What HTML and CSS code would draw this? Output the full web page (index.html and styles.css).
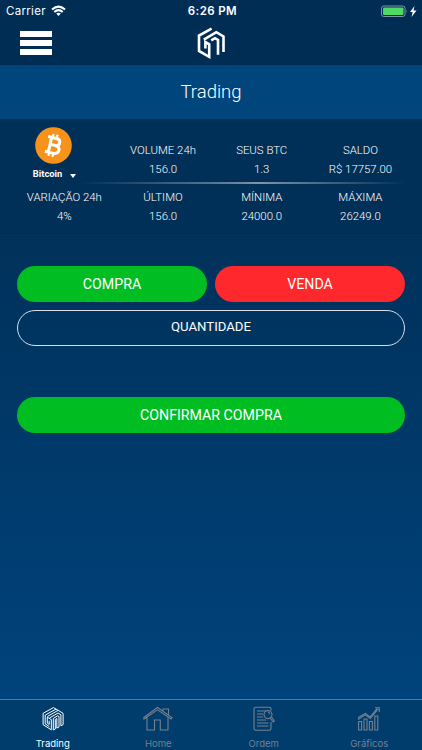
FILE: index.html
```html
<!DOCTYPE html>
<html lang="pt-BR">
<head>
<meta charset="utf-8">
<meta name="viewport" content="width=device-width, initial-scale=1">
<title>Trading</title>
<link rel="stylesheet" href="styles.css">
</head>
<body>
<div class="app">
  <header class="top">
    <div class="status">
      <div class="carrier"><span>Carrier</span>
        <svg width="15" height="12" viewBox="0 0 15 12" fill="none" stroke="#fff" stroke-width="2"><path d="M1 4.4Q7.5-1.2 14 4.4M3.3 7Q7.5 3.3 11.7 7"/><path d="M5.2 8.6Q7.5 6.7 9.8 8.6L7.5 11Z" fill="#fff" stroke="none"/></svg>
      </div>
      <div class="clock">6:26 PM</div>
      <div class="power">
        <svg width="36" height="13" viewBox="0 0 36 13"><rect x=".5" y="1" width="23.5" height="10.5" rx="2.2" fill="none" stroke="#8295a8"/><rect x="2" y="2.5" width="20.5" height="7.5" rx="1" fill="#4cd964"/><path d="M25.3 4.5q1.4 1.7 0 3.5z" fill="#8295a8"/><path d="M33.5 1 29 7h2.7L30.5 12 35.5 5.4h-3z" fill="#fff"/></svg>
      </div>
    </div>
    <div class="nav">
      <div class="menu"><i></i><i></i><i></i></div>
      <svg class="logo" width="30" height="33" viewBox="0 0 30 33" fill="none" stroke="#fff" stroke-width="2.6"><path d="M15.6 2.6 3 9.6V25L13.2 30.8V18.3L9.4 16V22.6"/><path d="M7.8 13.6 20.3 6.2 27.5 10.4V26"/><path d="M15.2 14.3 19 12.2 22 14V28.8"/></svg>
    </div>
  </header>
  <h1 class="title">Trading</h1>
  <section class="stats">
    <div class="row first">
      <div class="coin">
        <svg width="37" height="37" viewBox="0 0 36 36"><circle cx="18" cy="18" r="17.8" fill="#f7931a"/><g transform="rotate(13 18 18)" fill="none" stroke="#fff"><path d="M11 10.7h8.2q4.1 0 4.1 3.4T19.2 17.6H14.5M18.8 17.6q5.4 0 5.4 3.9T18.8 25.4H11M14.5 10.7v14.7" stroke-width="2.9"/><path d="M15.5 7v3.5M19.5 7v3.5M15.5 25.5V29M19.5 25.5V29" stroke-width="2.1"/></g></svg>
        <div class="pick"><span>Bitcoin</span><svg width="6" height="4" viewBox="0 0 6 4"><path d="M0 0h6L3 4z" fill="#fff"/></svg></div>
      </div>
      <div class="stat"><span>VOLUME 24h</span><span>156.0</span></div>
      <div class="stat"><span>SEUS BTC</span><span>1.3</span></div>
      <div class="stat"><span>SALDO</span><span>R$ 17757.00</span></div>
    </div>
    <div class="rule"></div>
    <div class="row">
      <div class="stat"><span>VARIAÇÃO 24h</span><span>4%</span></div>
      <div class="stat"><span>ÚLTIMO</span><span>156.0</span></div>
      <div class="stat"><span>MÍNIMA</span><span>24000.0</span></div>
      <div class="stat"><span>MÁXIMA</span><span>26249.0</span></div>
    </div>
  </section>
  <main class="order">
    <div class="sides">
      <button class="btn buy">COMPRA</button>
      <button class="btn sell">VENDA</button>
    </div>
    <button class="btn amount">QUANTIDADE</button>
    <button class="btn buy confirm">CONFIRMAR COMPRA</button>
  </main>
  <nav class="tabs">
    <div class="tab active">
      <svg width="30" height="26" viewBox="0 0 30 26" fill="none" stroke="#fff" stroke-width="1"><path d="M15.5 1.6 5.1 7.3V18.7L13.3 23.8V13.5L9.3 11.2V17.2L11.2 18.3V14.8"/><path d="M15.5 1.6 18 3.1 7.2 9.1V17.9L11.4 20.6"/><path d="M18 3.1 20.2 4.3 9.3 10.5M20.2 4.3 25.1 7.4V18.6L22.9 19.8V8.8L20 7 11.4 12"/><path d="M15.3 24V12.4L19.8 9.7 21 10.6V21L18.8 22.1V12.5L17.3 13.5V23L15.3 24"/></svg>
      <span>Trading</span></div>
    <div class="tab">
      <svg width="30" height="26" viewBox="0 0 30 26" fill="none" stroke="#74818f" stroke-width="1.1"><path d="M4 11.5V24h7.5V14h5.8v10H25V11.5M1 13 .8 11.6 14.5 1.5 29 11.6 28 13 14.5 3.8ZM19.5 3h6v6.2M20 3v2.5"/></svg>
      <span>Home</span></div>
    <div class="tab">
      <svg width="30" height="26" viewBox="0 0 30 26" fill="none" stroke="#74818f" stroke-width="1.1"><path d="M22 16v6.5q0 1.7-1.7 1.7H6.7Q5 24.2 5 22.5V3Q5 1.3 6.7 1.3H20.3Q22 1.3 22 3v1.5M8 5h9M8 8h6M8 11h6M8 14h9M8 17h11.5M8 20h11.5"/><circle cx="19" cy="8.6" r="4"/><path d="m21 12 3.2 4 1.1-1-3-4.2M19 6.3a2.2 2.2 0 0 1 2 2"/></svg>
      <span>Ordem</span></div>
    <div class="tab">
      <svg width="30" height="26" viewBox="0 0 30 26" fill="none" stroke="#74818f" stroke-width="1.1"><path d="M4.6 24v-8.5h3V24zM10 24V13h3v11zM15.4 24v-8.5h3V24zM20.8 24V10h3v14zM4 13.5l7.3-4.7 5 3.8L24.2 3M4 11.8l7.3-4.5 4.8 3.7L23 2.6M21 1.8h4.3V6"/></svg>
      <span>Gráficos</span></div>
  </nav>
</div>
</body>
</html>
```
FILE: styles.css
```css
* { box-sizing: border-box; }
body { margin: 0; font-family: Roboto, "Liberation Sans", sans-serif; color: #fff; }
.app {
  width: 422px; height: 750px; display: flex; flex-direction: column; overflow: hidden;
  background: linear-gradient(#00315a 230px, #00437c 700px);
}
.top { height: 65px; flex: none; background: #002d54; }
.status {
  height: 22px; display: grid; grid-template-columns: 1fr 1fr 1fr; align-items: center;
  padding: 0 5px 0 6px; font-family: Inter, sans-serif; font-size: 11.5px;
}
.carrier { display: flex; align-items: center; gap: 5px; letter-spacing: .3px; }
.clock { text-align: center; font-weight: 600; letter-spacing: .4px; white-space: nowrap; padding-left: 2px; }
.power { display: flex; justify-content: flex-end; }
.nav { height: 43px; display: flex; align-items: flex-start; }
.menu { display: grid; gap: 3px; margin: 9px 0 0 20px; }
.menu i { display: block; width: 32px; height: 6px; background: #fff; }
.logo { margin: 4px 0 0 144px; }
.title {
  height: 54px; margin: 0; flex: none; display: flex; align-items: center; justify-content: center;
  background: #00457c; font-size: 18.5px; font-weight: 300; letter-spacing: 0;
  box-shadow: 0 1px 2px #00264a;
}
.stats { height: 115px; flex: none; background: #003058; padding: 0 12px 0 15px; border-bottom: 1px solid #002a50; }
.row { display: grid; grid-template-columns: repeat(4, 98.7px); }
.first { height: 63px; }
.coin { display: flex; flex-direction: column; align-items: center; width: 77px; padding-top: 8px; }
.pick { display: flex; align-items: center; gap: 8px; font-size: 9.3px; font-weight: 700; line-height: 11px; margin: 4px 0 0 2px; }
.pick svg { margin-top: 5px; }
.stat {
  display: flex; flex-direction: column; align-items: center;
  font-size: 11.4px; font-weight: 300; line-height: 18.5px; white-space: nowrap;
}
.first .stat { padding-top: 22px; }
.rule {
  height: 2px; width: 325px; margin-left: 65px;
  background: linear-gradient(90deg, transparent, #58728d 40%, #8094a8 55%, #58728d 70%, transparent);
}
.rule + .row { padding-top: 4px; }
.order { flex: 1; padding: 32px 17px 0; }
.sides { display: grid; grid-template-columns: 1fr 1fr; gap: 8px; }
.btn {
  display: block; width: 100%; height: 36px; padding: 0; border: 0; border-radius: 18px;
  color: #fff; font: 400 14.2px/35px Roboto, sans-serif; text-align: center;
}
.buy { background: #00bd22; }
.sell { background: #ff282d; }
.amount { margin-top: 8px; border: 1px solid #d5e0ea; background: none; font-size: 13.2px; line-height: 32px; padding-bottom: 2px; }
.confirm { margin-top: 51px; }
.tabs {
  height: 51px; flex: none; display: grid; grid-template-columns: repeat(4, 1fr);
  background: #003c6c; border-top: 1px solid #52799d;
}
.tab {
  display: flex; flex-direction: column; align-items: center; padding-top: 6px;
  color: #74818f; font: 400 9.5px/13px Inter, "Liberation Sans", sans-serif;
}
.tab span { margin-top: 5px; }
.active { color: #fff; }
```
